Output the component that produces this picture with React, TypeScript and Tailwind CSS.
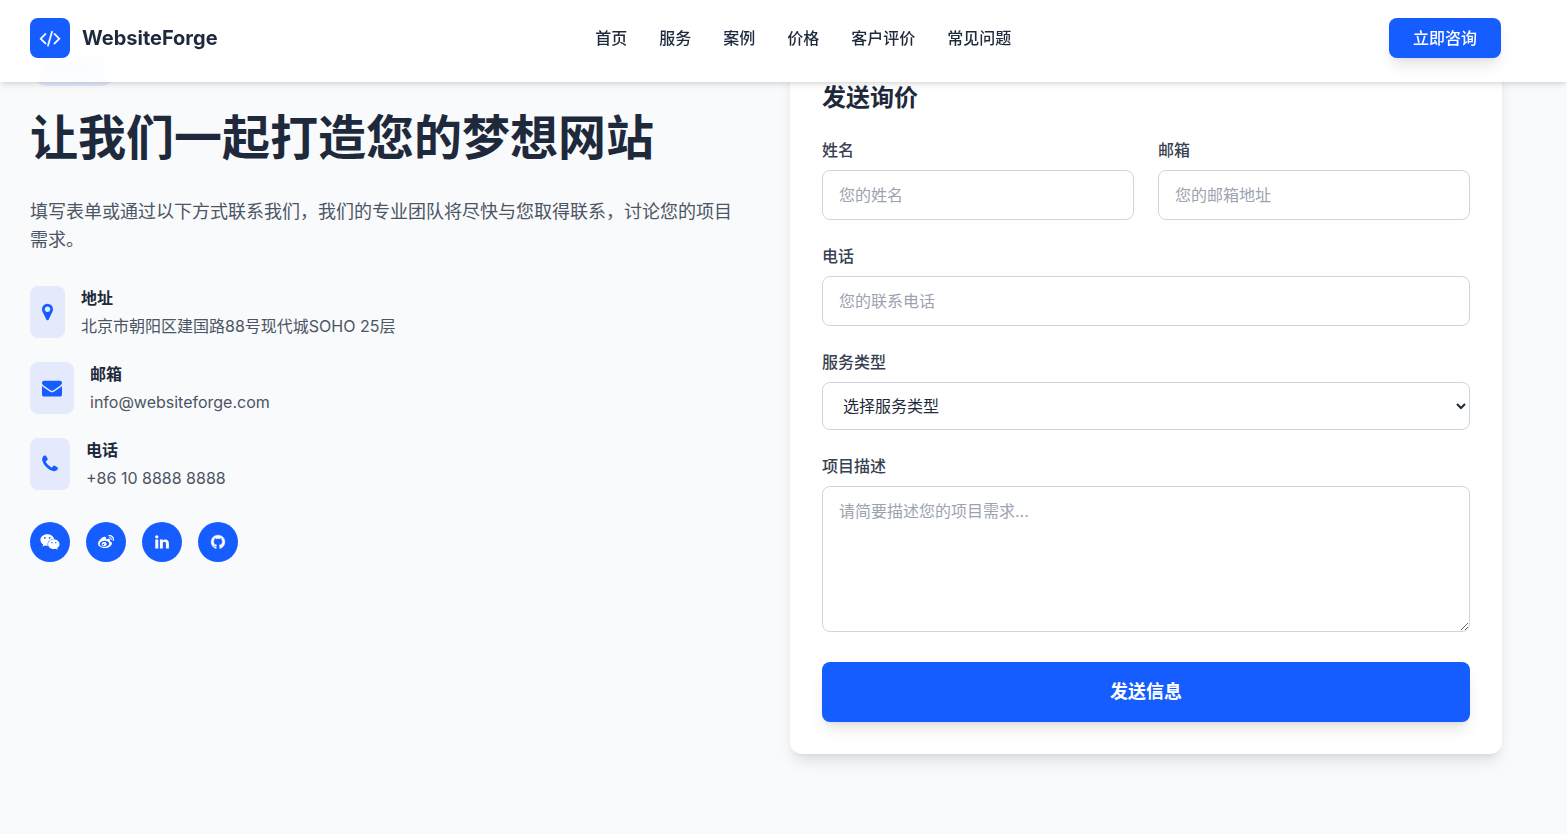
import { useState, type FormEvent, type ReactNode } from 'react';
import { FaWeibo, FaWeixin } from 'react-icons/fa';

const NAV_ITEMS = [
  { href: '#home', label: '首页' },
  { href: '#services', label: '服务' },
  { href: '#cases', label: '案例' },
  { href: '#pricing', label: '价格' },
  { href: '#testimonials', label: '客户评价' },
  { href: '#faq', label: '常见问题' },
];

const FIELD =
  'block w-full rounded-lg border border-[#d1d5db] bg-white px-4 py-3 text-base leading-6 text-[#1e293b] placeholder:text-[#9ca3af] focus:border-[#165dff] focus:outline-none';

interface GlyphProps {
  viewBox?: string;
  className: string;
  d: string;
}

function Glyph({ viewBox = '0 0 1792 1792', className, d }: GlyphProps) {
  return (
    <svg viewBox={viewBox} className={className} fill="currentColor" aria-hidden="true">
      <path d={d} />
    </svg>
  );
}

const CODE =
  'M617 1399l-50 50q-10 10-23 10t-23-10l-466-466q-10-10-10-23t10-23l466-466q10-10 23-10t23 10l50 50q10 10 10 23t-10 23l-393 393 393 393q10 10 10 23t-10 23zm591-1067l-373 1291q-4 13-15.5 19.5t-23.5 2.5l-62-17q-13-4-19.5-15.5t-2.5-24.5l373-1291q4-13 15.5-19.5t23.5-2.5l62 17q13 4 19.5 15.5t2.5 24.5zm657 651l-466 466q-10 10-23 10t-23-10l-50-50q-10-10-10-23t10-23l393-393-393-393q-10-10-10-23t10-23l50-50q10-10 23-10t23 10l466 466q10 10 10 23t-10 23z';
const MARKER =
  'M1152 640q0-106-75-181t-181-75-181 75-75 181 75 181 181 75 181-75 75-181zm256 0q0 109-33 179l-364 774q-16 33-47.5 52t-67.5 19-67.5-19-46.5-52l-365-774q-33-70-33-179 0-212 150-362t362-150 362 150 150 362z';
const ENVELOPE =
  'M1792 710v794q0 66-47 113t-113 47h-1472q-66 0-113-47t-47-113v-794q44 49 101 87 362 246 497 345 57 42 92.5 65.5t94.5 48 110 24.5h2q51 0 110-24.5t94.5-48 92.5-65.5q170-123 498-345 57-39 100-87zm0-294q0 79-49 151t-122 123q-376 261-468 325-10 7-42.5 31t-54 38.5-52 32.5-57.5 27-50 9h-2q-23 0-50-9t-57.5-27-52-32.5-54-38.5-42.5-31q-91-64-262-182.5t-205-142.5q-62-42-117-115.5t-55-136.5q0-78 41.5-130t118.5-52h1472q65 0 112.5 47t47.5 113z';
const PHONE =
  'M1600 1240q0 27-10 70.5t-21 68.5q-21 50-122 106-94 51-186 51-27 0-53-3.5t-57.5-12.5-47-14.5-55.5-20.5-49-18q-98-35-175-83-127-79-264-216t-216-264q-48-77-83-175-3-9-18-49t-20.5-55.5-14.5-47-12.5-57.5-3.5-53q0-92 51-186 56-101 106-122 25-11 68.5-21t70.5-10q14 0 21 3 18 6 53 76 11 19 30 54t35 63.5 31 53.5q3 4 17.5 25t21.5 35.5 7 28.5q0 20-28.5 50t-62 55-62 53-28.5 46q0 9 5 22.5t8.5 20.5 14 24 11.5 19q76 137 174 235t235 174q2 1 19 11.5t24 14 20.5 8.5 22.5 5q18 0 46-28.5t53-62 55-62 50-28.5q14 0 28.5 7t35.5 21.5 25 17.5q25 15 53.5 31t63.5 35 54 30q70 35 76 53 3 7 3 21z';
const LINKEDIN =
  'M477 625v991h-330v-991h330zm21-306q1 73-50.5 122t-135.5 49h-2q-82 0-132-49t-50-122q0-74 51.5-122.5t134.5-48.5 133 48.5 51 122.5zm1166 729v568h-329v-530q0-105-40.5-164.5t-126.5-59.5q-63 0-105.5 34.5t-63.5 85.5q-11 30-11 81v553h-329q2-399 2-647t-1-296l-1-48h329v144h-2q20-32 41-56t56.5-52 87-43.5 114.5-15.5q171 0 275 113.5t104 332.5z';
const GITHUB =
  'M896 128q209 0 385.5 103t279.5 279.5 103 385.5q0 251-146.5 451.5t-378.5 277.5q-27 5-40-7t-13-30q0-3 .5-76.5t.5-134.5q0-97-52-142 57-6 102.5-18t94-39 81-66.5 53-105 20.5-150.5q0-119-79-206 37-91-8-204-28-9-81 11t-92 44l-38 24q-93-26-192-26t-192 26q-16-11-42.5-27t-83.5-38.5-85-13.5q-45 113-8 204-79 87-79 206 0 85 20.5 150t52.5 105 80.5 67 94 39 102.5 18q-39 36-49 103-21 10-45 15t-57 5-65.5-21.5-55.5-62.5q-19-32-48.5-52t-49.5-24l-20-3q-21 0-29 4.5t-5 11.5 9 14 13 12l7 5q22 10 43.5 38t31.5 51l10 23q13 38 44 61.5t67 30 69.5 7 55.5-3.5l23-4q0 38 .5 88.5t.5 54.5q0 18-13 30t-40 7q-232-77-378.5-277.5t-146.5-451.5q0-209 103-385.5t279.5-279.5 385.5-103z';

// glyphs keep their own advance width, so the boxes differ in width
const CONTACTS = [
  {
    title: '地址',
    text: '北京市朝阳区建国路88号现代城SOHO 25层',
    icon: <Glyph viewBox="384 0 1024 1792" className="h-5 w-[11px]" d={MARKER} />,
  },
  {
    title: '邮箱',
    text: 'info@websiteforge.com',
    icon: <Glyph className="size-5" d={ENVELOPE} />,
  },
  {
    title: '电话',
    text: '+86 10 8888 8888',
    icon: <Glyph viewBox="192 0 1408 1792" className="h-5 w-4" d={PHONE} />,
  },
];

const SOCIALS = [
  { label: '微信', icon: <FaWeixin className="size-5" /> },
  { label: '微博', icon: <FaWeibo className="size-4" /> },
  { label: 'LinkedIn', icon: <Glyph className="size-4" d={LINKEDIN} /> },
  { label: 'GitHub', icon: <Glyph className="size-4 stroke-current stroke-[50]" d={GITHUB} /> },
];

function Field({ id, label, children }: { id: string; label: string; children: ReactNode }) {
  return (
    <div>
      <label htmlFor={id} className="mb-2 block text-base font-medium leading-6 text-[#374151]">
        {label}
      </label>
      {children}
    </div>
  );
}

function Header() {
  return (
    <header className="fixed inset-x-0 top-0 z-50 bg-white/95 shadow-md backdrop-blur-sm">
      <div className="flex items-center justify-between pt-[18px] pr-[66px] pb-6 pl-[30px]">
        <a href="#home" className="flex items-center gap-3">
          <span className="flex size-10 items-center justify-center rounded-lg bg-[#165dff] text-white">
            <Glyph viewBox="0 0 1920 1792" className="h-5 w-[22px] stroke-current stroke-[30]" d={CODE} />
          </span>
          <span className="text-xl font-bold">WebsiteForge</span>
        </a>
        <nav className="flex items-center gap-8">
          {NAV_ITEMS.map((item) => (
            <a key={item.href} href={item.href} className="font-medium hover:text-[#165dff]">
              {item.label}
            </a>
          ))}
        </nav>
        <a
          href="#contact"
          className="rounded-lg bg-[#165dff] px-6 py-2 font-medium text-white shadow-lg hover:bg-[#165dff]/90"
        >
          立即咨询
        </a>
      </div>
    </header>
  );
}

function ContactInfo() {
  return (
    <div>
      <span className="block w-fit rounded-full bg-[#165dff]/10 px-4 py-2 text-sm leading-5 font-medium text-[#165dff]">
        联系我们
      </span>
      <h2 className="mt-6 text-5xl leading-[56px] font-bold">让我们一起打造您的梦想网站</h2>
      <p className="mt-8 text-lg leading-7 text-[#4b5563]">
        填写表单或通过以下方式联系我们，我们的专业团队将尽快与您取得联系，讨论您的项目需求。
      </p>
      <div className="mt-8 space-y-6">
        {CONTACTS.map((item) => (
          <div key={item.title} className="flex">
            <div className="mr-4 flex items-center rounded-lg bg-[#e4eafc] px-3 text-[#165dff]">
              {item.icon}
            </div>
            <div>
              <h4 className="mb-1 font-bold">{item.title}</h4>
              <p className="text-[#4b5563]">{item.text}</p>
            </div>
          </div>
        ))}
      </div>
      <div className="mt-8 flex gap-4">
        {SOCIALS.map((s) => (
          <a
            key={s.label}
            href="#contact"
            aria-label={s.label}
            className="flex size-10 items-center justify-center rounded-full bg-[#165dff] text-white hover:bg-[#165dff]/90"
          >
            {s.icon}
          </a>
        ))}
      </div>
    </div>
  );
}

function QuoteForm() {
  const [service, setService] = useState('');

  function handleSubmit(e: FormEvent) {
    e.preventDefault();
  }

  return (
    <div className="rounded-xl bg-white p-8 shadow-lg">
      <h3 className="mb-6 text-2xl leading-8 font-bold">发送询价</h3>
      <form className="space-y-6" onSubmit={handleSubmit}>
        <div className="grid grid-cols-2 gap-6">
          <Field id="name" label="姓名">
            <input id="name" type="text" placeholder="您的姓名" className={FIELD} />
          </Field>
          <Field id="email" label="邮箱">
            <input id="email" type="email" placeholder="您的邮箱地址" className={FIELD} />
          </Field>
        </div>
        <Field id="phone" label="电话">
          <input id="phone" type="tel" placeholder="您的联系电话" className={FIELD} />
        </Field>
        <Field id="service" label="服务类型">
          <select
            id="service"
            value={service}
            onChange={(e) => setService(e.target.value)}
            className="block h-12 w-full rounded-lg border border-[#d1d5db] bg-white px-4 text-base text-[#1e293b] focus:border-[#165dff] focus:outline-none"
          >
            <option value="">选择服务类型</option>
          </select>
        </Field>
        <Field id="message" label="项目描述">
          <textarea id="message" rows={5} placeholder="请简要描述您的项目需求..." className={FIELD} />
        </Field>
        <button
          type="submit"
          className="mt-1.5 w-full rounded-lg bg-[#165dff] py-4 text-lg leading-7 font-bold text-white shadow-lg hover:bg-[#165dff]/90"
        >
          发送信息
        </button>
      </form>
    </div>
  );
}

export default function App() {
  return (
    <div className="min-h-screen bg-[#f9fafc] font-['Inter','Noto_Sans_CJK_SC',sans-serif] text-base leading-6 text-[#1e293b]">
      <Header />
      <section id="contact" className="pt-[50px] pr-[65px] pb-20 pl-[30px]">
        <div className="grid grid-cols-2 gap-12">
          <ContactInfo />
          <QuoteForm />
        </div>
      </section>
    </div>
  );
}
